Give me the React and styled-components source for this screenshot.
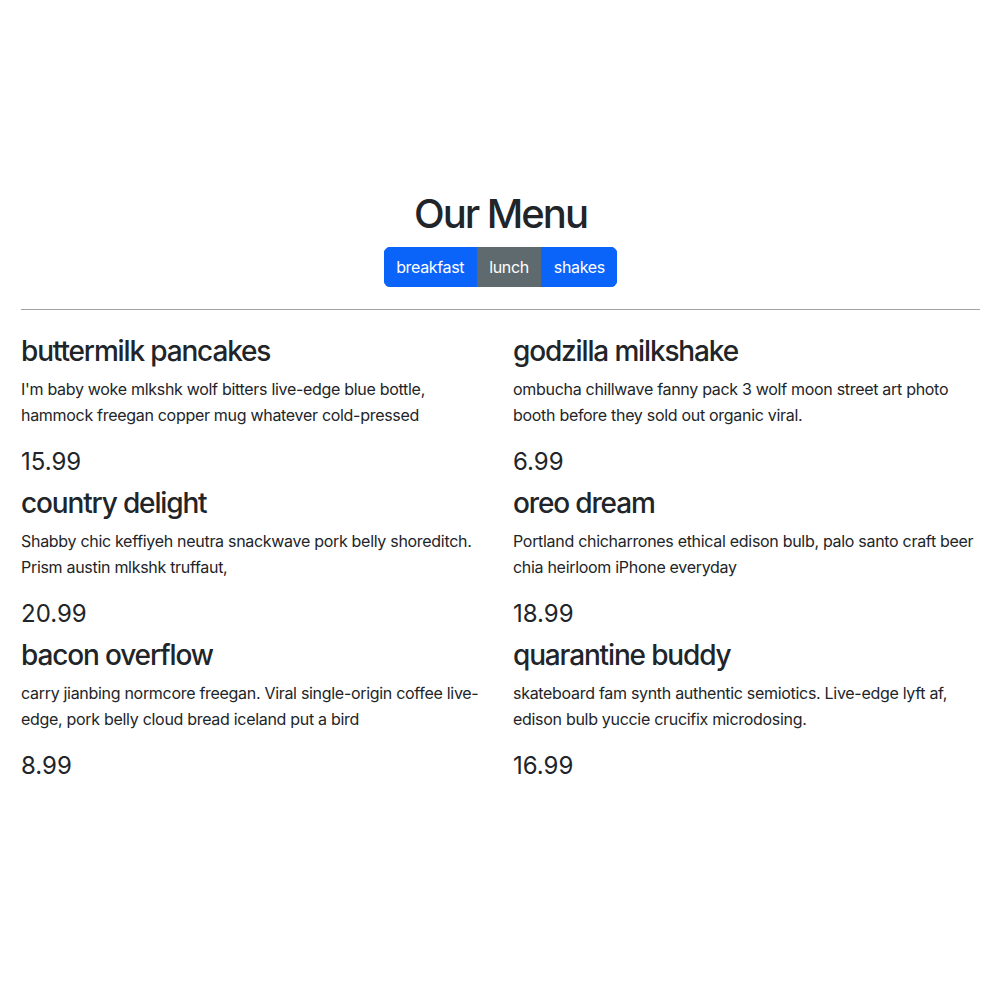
import React, { useState } from "react";
import styled, { createGlobalStyle } from "styled-components";

const GlobalStyle = createGlobalStyle`
  html, body {
    margin: 0;
    padding: 0;
    background: #ffffff;
  }
  body {
    font-family: Inter, "Noto Sans", "Liberation Sans", sans-serif;
    color: #212529;
  }
  * { box-sizing: border-box; }
`;

const Page = styled.main`
  padding: 190px 20px 0 21px;
`;

const Header = styled.header`
  display: flex;
  flex-direction: column;
  align-items: center;
`;

const Title = styled.h1`
  margin: 0;
  font-size: 40px;
  line-height: 48px;
  font-weight: 500;
  letter-spacing: -2px;
`;

const BtnGroup = styled.div`
  display: flex;
  margin-top: 9px;
  border-radius: 6px;
  overflow: hidden;
`;

const FilterBtn = styled.button`
  font-family: inherit;
  font-size: 16px;
  line-height: 24px;
  font-weight: 400;
  letter-spacing: -0.35px;
  color: #ffffff;
  padding: 7px 11.5px;
  border: 1px solid ${(p) => (p.$active ? "#5f6a6e" : "#0a64fa")};
  background: ${(p) => (p.$active ? "#5f6a6e" : "#0a64fa")};
  cursor: pointer;
`;

const Divider = styled.hr`
  margin: 22px 0 24px;
  border: 0;
  border-top: 1px solid #a3a3a3;
`;

const Grid = styled.section`
  display: grid;
  grid-template-columns: 1fr 1fr;
  column-gap: 25px;
`;

const Column = styled.div`
  display: flex;
  flex-direction: column;
`;

const Item = styled.article`
  display: flex;
  flex-direction: column;
`;

const Name = styled.h3`
  margin: 0 0 8px;
  font-size: 28px;
  line-height: 34px;
  font-weight: 500;
  letter-spacing: -1.15px;
`;

const Desc = styled.p`
  margin: 0 0 19px;
  font-size: 16px;
  line-height: 26px;
  letter-spacing: -0.3px;
`;

const Price = styled.h4`
  margin: 0 0 10px;
  font-size: 24px;
  line-height: 29px;
  font-weight: 400;
`;

const left = [
  {
    name: "buttermilk pancakes",
    desc: "I'm baby woke mlkshk wolf bitters live-edge blue bottle, hammock freegan copper mug whatever cold-pressed",
    price: "15.99",
  },
  {
    name: "country delight",
    desc: "Shabby chic keffiyeh neutra snackwave pork belly shoreditch. Prism austin mlkshk truffaut,",
    price: "20.99",
  },
  {
    name: "bacon overflow",
    desc: "carry jianbing normcore freegan. Viral single-origin coffee live-edge, pork belly cloud bread iceland put a bird",
    price: "8.99",
  },
];

const right = [
  {
    name: "godzilla milkshake",
    desc: "ombucha chillwave fanny pack 3 wolf moon street art photo booth before they sold out organic viral.",
    price: "6.99",
  },
  {
    name: "oreo dream",
    desc: "Portland chicharrones ethical edison bulb, palo santo craft beer chia heirloom iPhone everyday",
    price: "18.99",
  },
  {
    name: "quarantine buddy",
    desc: "skateboard fam synth authentic semiotics. Live-edge lyft af, edison bulb yuccie crucifix microdosing.",
    price: "16.99",
  },
];

const MenuItem = ({ item }) => (
  <Item>
    <Name>{item.name}</Name>
    <Desc>{item.desc}</Desc>
    <Price>{item.price}</Price>
  </Item>
);

export default function App() {
  const [active, setActive] = useState("lunch");
  return (
    <>
      <GlobalStyle />
      <Page>
        <Header>
          <Title>Our Menu</Title>
          <BtnGroup>
            {["breakfast", "lunch", "shakes"].map((c) => (
              <FilterBtn key={c} $active={active === c} onClick={() => setActive(c)}>
                {c}
              </FilterBtn>
            ))}
          </BtnGroup>
        </Header>
        <Divider />
        <Grid>
          <Column>
            {left.map((it) => (
              <MenuItem key={it.name} item={it} />
            ))}
          </Column>
          <Column>
            {right.map((it) => (
              <MenuItem key={it.name} item={it} />
            ))}
          </Column>
        </Grid>
      </Page>
    </>
  );
}
